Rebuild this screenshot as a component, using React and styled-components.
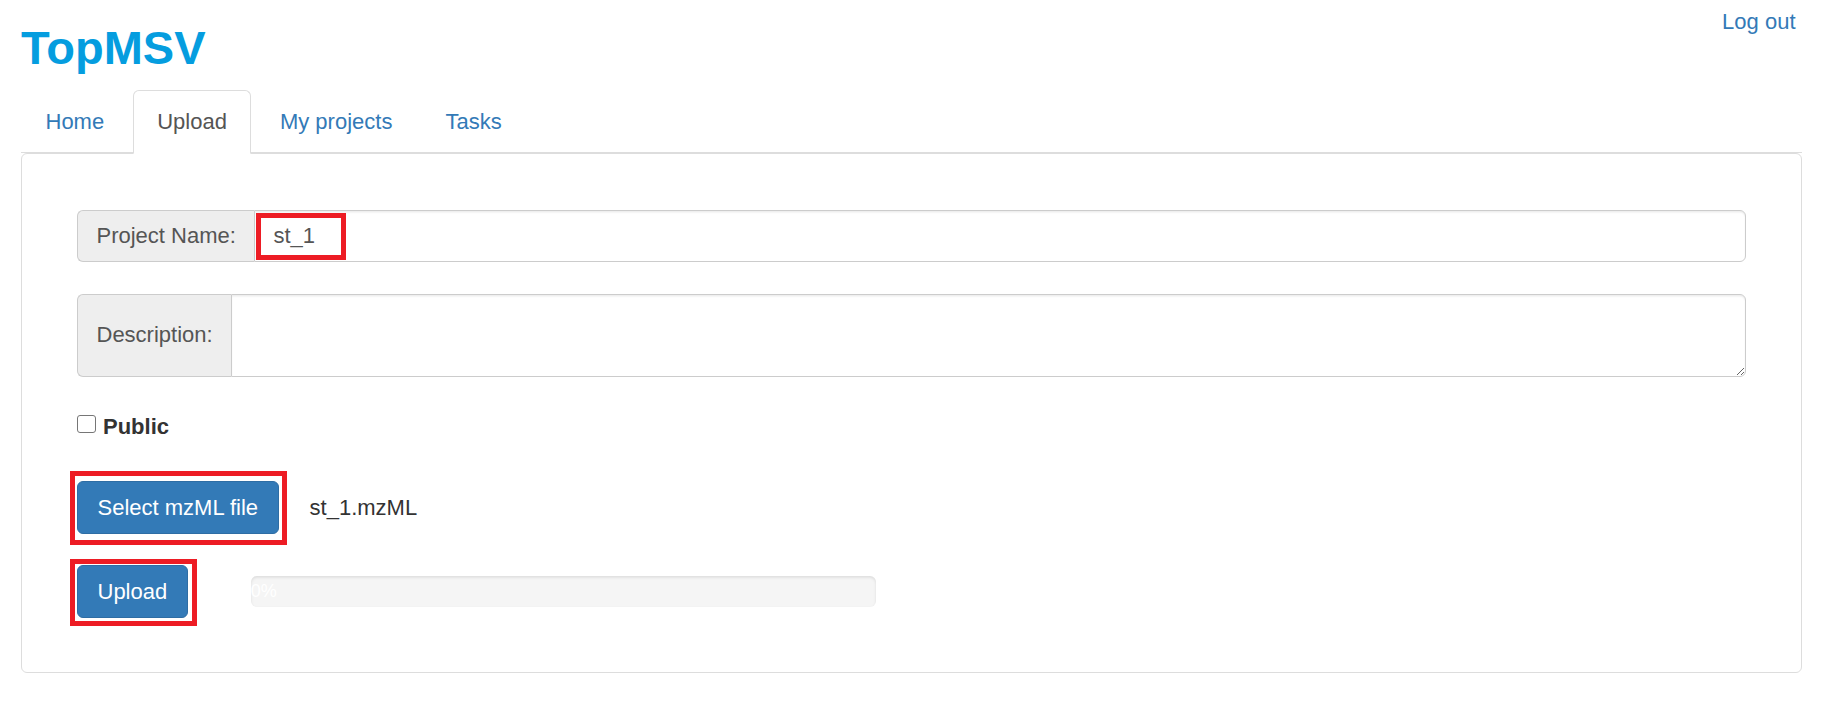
import React, { useState } from "react";
import styled, { createGlobalStyle } from "styled-components";

const GlobalStyle = createGlobalStyle`
  html, body {
    margin: 0;
    padding: 0;
    background: #fff;
  }
  body {
    font-family: "Liberation Sans", Arial, sans-serif;
    font-size: 22px;
    line-height: 30px;
    color: #333;
  }
  * {
    box-sizing: border-box;
  }
`;

const tabs = ["Home", "Upload", "My projects", "Tasks"];

export default function App() {
  const [active, setActive] = useState("Upload");
  const [name, setName] = useState("st_1");
  const [progress] = useState(0);

  return (
    <Page>
      <GlobalStyle />
      <Header>
        <Brand>TopMSV</Brand>
        <LogoutLink href="#">Log out</LogoutLink>
      </Header>

      <TabList>
        {tabs.map((t) => (
          <Tab key={t} $active={t === active} onClick={() => setActive(t)}>
            {t}
          </Tab>
        ))}
      </TabList>

      <Panel>
        <InputGroup>
          <Addon>Project Name:</Addon>
          <Field>
            <TextInput value={name} onChange={(e) => setName(e.target.value)} />
            <NameMark />
          </Field>
        </InputGroup>

        <InputGroup $tall>
          <Addon>Description:</Addon>
          <TextArea rows={2} />
        </InputGroup>

        <CheckRow>
          <Check type="checkbox" />
          <CheckLabel>Public</CheckLabel>
        </CheckRow>

        <FileRow>
          <Marked $top={10} $bottom={11} $left={7.3} $right={8.3}>
            <PrimaryButton $h={53}>Select mzML file</PrimaryButton>
          </Marked>
          <FileName>st_1.mzML</FileName>
        </FileRow>

        <UploadRow>
          <Marked $top={6} $bottom={8.3} $left={7.3} $right={9.7}>
            <PrimaryButton $h={52.7}>Upload</PrimaryButton>
          </Marked>
          <Progress>
            <Bar style={{ width: `${progress}%` }}>{progress}%</Bar>
          </Progress>
        </UploadRow>
      </Panel>
    </Page>
  );
}

const Page = styled.div`
  padding: 0 26.5px 0 21px;
`;

const Header = styled.div`
  display: flex;
  justify-content: space-between;
  align-items: flex-start;
`;

const Brand = styled.h2`
  margin: 22.5px 0 17.5px 0;
  font-size: 47px;
  line-height: 49.5px;
  font-weight: bold;
  color: #059ddf;
`;

const LogoutLink = styled.a`
  margin-top: 6.5px;
  margin-right: 6px;
  line-height: 30px;
  color: #337ab7;
  text-decoration: none;
`;

const TabList = styled.div`
  display: flex;
  border-bottom: 1.5px solid #ddd;
`;

const Tab = styled.a`
  padding: 16px 23.5px;
  line-height: 30px;
  margin-right: 4px;
  margin-bottom: -1.5px;
  border: 1.5px solid transparent;
  border-radius: 6px 6px 0 0;
  cursor: pointer;
  color: ${(p) => (p.$active ? "#555" : "#337ab7")};
  background: ${(p) => (p.$active ? "#fff" : "transparent")};
  border-color: ${(p) => (p.$active ? "#ddd #ddd transparent" : "transparent")};
`;

const Panel = styled.div`
  border: 1.5px solid #ddd;
  border-radius: 6px;
  padding: 55.5px 55px 54px 55px;
`;

const InputGroup = styled.div`
  display: flex;
  height: ${(p) => (p.$tall ? "83.4px" : "52px")};
  margin-bottom: 32px;
`;

const Addon = styled.div`
  display: flex;
  align-items: center;
  padding: 0 18.5px;
  background: #eee;
  color: #555;
  border: 1.5px solid #ccc;
  border-right: 0;
  border-radius: 6px 0 0 6px;
  white-space: nowrap;
`;

const Field = styled.div`
  position: relative;
  flex: 1;
  display: flex;
`;

const TextInput = styled.input`
  flex: 1;
  width: 100%;
  padding: 9px 18px;
  font: inherit;
  line-height: 30px;
  color: #555;
  border: 1.5px solid #ccc;
  border-radius: 0 6px 6px 0;
  box-shadow: inset 0 1.5px 1.5px rgba(0, 0, 0, 0.075);
  outline: none;
`;

const TextArea = styled.textarea`
  flex: 1;
  padding: 9px 18px;
  font: inherit;
  line-height: 30px;
  color: #555;
  border: 1.5px solid #ccc;
  border-radius: 0 6px 6px 0;
  box-shadow: inset 0 1.5px 1.5px rgba(0, 0, 0, 0.075);
  resize: vertical;
  outline: none;
`;

const NameMark = styled.span`
  position: absolute;
  left: 1.7px;
  top: 3.4px;
  width: 90px;
  height: 47.3px;
  border: 5px solid #ed1c24;
  pointer-events: none;
`;

const CheckRow = styled.label`
  display: flex;
  align-items: flex-start;
  margin-top: 35px;
  height: 30px;
`;

const Check = styled.input`
  appearance: none;
  width: 18.5px;
  height: 18px;
  margin: 3.3px 0 0 0;
  border: 1.5px solid #767676;
  border-radius: 3px;
  background: #fff;
`;

const CheckLabel = styled.span`
  margin-left: 7.5px;
  font-weight: bold;
`;

const FileRow = styled.div`
  display: flex;
  align-items: center;
  margin-top: 39.3px;
`;

const UploadRow = styled.div`
  display: flex;
  align-items: center;
  margin-top: 31px;
`;

const Marked = styled.div`
  position: relative;
  display: flex;

  &::after {
    content: "";
    position: absolute;
    top: -${(p) => p.$top}px;
    bottom: -${(p) => p.$bottom}px;
    left: -${(p) => p.$left}px;
    right: -${(p) => p.$right}px;
    border: 5px solid #ed1c24;
    pointer-events: none;
  }
`;

const PrimaryButton = styled.button`
  height: ${(p) => p.$h}px;
  padding: 0 19.5px;
  font: inherit;
  line-height: 30px;
  color: #fff;
  background: #337ab7;
  border: 1.5px solid #2e6da4;
  border-radius: 6px;
  cursor: pointer;
`;

const FileName = styled.span`
  margin-left: 31px;
`;

const Progress = styled.div`
  margin-left: 63px;
  width: 625px;
  height: 30.7px;
  background: #f5f5f5;
  border-radius: 6px;
  box-shadow: inset 0 1.5px 3px rgba(0, 0, 0, 0.1);
  overflow: visible;
`;

const Bar = styled.div`
  height: 100%;
  font-size: 18px;
  line-height: 30px;
  color: #fff;
  white-space: nowrap;
  background: #337ab7;
`;
